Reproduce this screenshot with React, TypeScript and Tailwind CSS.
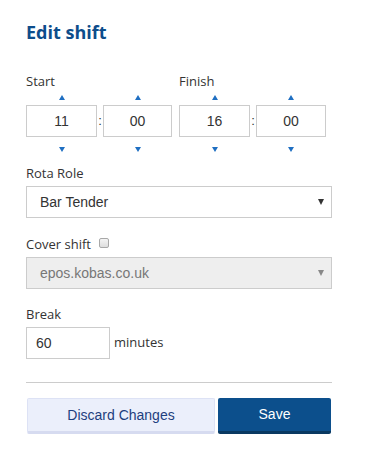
import React from "react";

const Up = () => (
  <div className="h-0 w-0 border-x-[3px] border-x-transparent border-b-[5px] border-b-[#1f6fc2]" />
);
const Down = () => (
  <div className="h-0 w-0 border-x-[3px] border-x-transparent border-t-[5px] border-t-[#1f6fc2]" />
);

function TimeBox({ value, w }: { value: string; w: string }) {
  return (
    <div className={`flex flex-col items-center ${w}`}>
      <div className="h-[15px] flex items-center">
        <Up />
      </div>
      <div className="h-[32px] w-full border border-[#cccccc] flex items-center justify-center text-[14px] text-[#333] font-['Liberation_Sans',Arial,sans-serif]">
        {value}
      </div>
      <div className="h-[24px] flex items-center">
        <Down />
      </div>
    </div>
  );
}

const Colon = () => (
  <div className="w-[6px] flex flex-col">
    <div className="h-[15px]" />
    <div className="h-[32px] flex items-center justify-center text-[13px] text-[#333] font-['Liberation_Sans',Arial,sans-serif]">
      :
    </div>
  </div>
);

const Caret = ({ color }: { color: string }) => (
  <div
    className={`h-0 w-0 border-x-[3.5px] border-x-transparent border-t-[6px] ${color}`}
  />
);

export default function App() {
  return (
    <div className="w-[368px] h-[460px] bg-white px-[26px] pt-5 font-['Open_Sans',sans-serif] text-[#333]">
      <h1 className="text-[18px] leading-[24px] font-bold text-[#0d4d8b]">Edit shift</h1>

      <div className="mt-[28px] flex">
        <div className="flex flex-col">
          <div className="text-[13px] leading-[18px]">Start</div>
          <div className="flex">
            <TimeBox value="11" w="w-[71px]" />
            <Colon />
            <TimeBox value="00" w="w-[69px]" />
          </div>
        </div>
        <div className="w-[7px]" />
        <div className="flex flex-col">
          <div className="text-[13px] leading-[18px]">Finish</div>
          <div className="flex">
            <TimeBox value="16" w="w-[71px]" />
            <Colon />
            <TimeBox value="00" w="w-[70px]" />
          </div>
        </div>
      </div>

      <div className="mt-[3px] text-[13px] leading-[18px]">Rota Role</div>
      <div className="mt-[4px] w-[306px] h-[32px] border border-[#cccccc] flex items-center justify-between pl-[13px] pr-[7px] text-[14px] text-[#333] font-['Liberation_Sans',Arial,sans-serif]">
        <span>Bar Tender</span>
        <Caret color="border-t-[#333]" />
      </div>

      <div className="mt-[17px] flex items-center text-[13px] leading-[18px]">
        <span>Cover shift</span>
        <span className="ml-[8px] mt-[-2px] inline-block w-[10px] h-[10px] rounded-[2px] border border-[#a8a8a8] bg-gradient-to-b from-[#f4f4f4] to-[#dedede]" />
      </div>
      <div className="mt-[4px] w-[306px] h-[32px] border border-[#cccccc] bg-[#eeeeee] flex items-center justify-between pl-[13px] pr-[7px] text-[14px] text-[#777] font-['Liberation_Sans',Arial,sans-serif]">
        <span>epos.kobas.co.uk</span>
        <Caret color="border-t-[#888]" />
      </div>

      <div className="mt-[16px] text-[13px] leading-[18px]">Break</div>
      <div className="mt-[4px] flex items-center">
        <div className="w-[84px] h-[32px] border border-[#cccccc] flex items-center pl-[9px] text-[14px] text-[#333] font-['Liberation_Sans',Arial,sans-serif]">
          60
        </div>
        <span className="ml-[4px] text-[13px]">minutes</span>
      </div>

      <div className="mt-[23px] w-[306px] h-px bg-[#cccccc]" />

      <div className="mt-[15px] flex w-[306px]">
        <button className="ml-[1px] w-[188px] h-[36px] bg-[#ebeffb] border border-[#dde2f5] border-b-[3px] border-b-[#d6dbf0] rounded-[2px] text-[14px] text-[#1e3e7e] font-['Liberation_Sans',Arial,sans-serif]">
          Discard Changes
        </button>
        <button className="ml-[3px] w-[113px] h-[36px] bg-[#0c4f8c] border-b-[3px] border-b-[#0a3961] rounded-[2px] text-[14px] text-white font-['Liberation_Sans',Arial,sans-serif]">
          Save
        </button>
      </div>
    </div>
  );
}
